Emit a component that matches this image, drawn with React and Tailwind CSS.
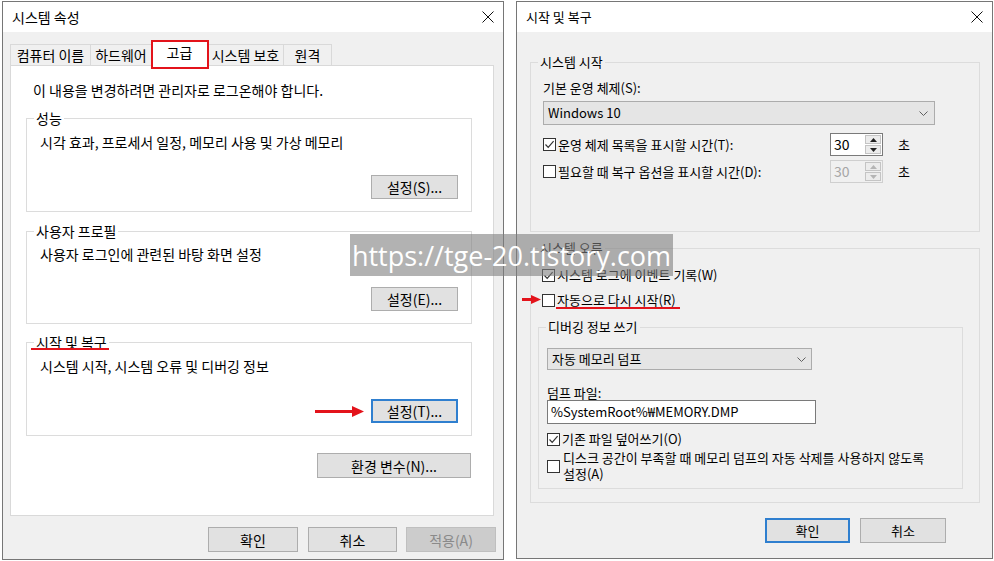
import clsx from "clsx";

function CloseIcon() {
  return (
    <svg width="12" height="12" viewBox="0 0 12 12" className="shrink-0">
      <path d="M0.5 0.5 L11.5 11.5 M11.5 0.5 L0.5 11.5" stroke="#111" strokeWidth="1" fill="none" />
    </svg>
  );
}

function Chevron() {
  return (
    <svg width="9" height="5" viewBox="0 0 9 5" className="shrink-0">
      <path d="M0.5 0.5 L4.5 4.5 L8.5 0.5" stroke="#606060" strokeWidth="1" fill="none" />
    </svg>
  );
}

function RedArrow({ className = "", width = 49, height = 11 }) {
  const head = Math.round(height * 1.1);
  return (
    <svg width={width} height={height} viewBox={`0 0 ${width} ${height}`} className={className}>
      <rect x="0" y={height / 2 - 1.5} width={width - head + 1} height="3" fill="#e3131b" />
      <path d={`M${width - head} 0 L${width} ${height / 2} L${width - head} ${height} Z`} fill="#e3131b" />
    </svg>
  );
}

function WinButton({ children, className = "", focused = false, disabled = false }) {
  return (
    <button
      type="button"
      className={clsx(
        "flex shrink-0 items-center justify-center leading-none",
        focused && "border-2 border-[#2f7fcf] bg-[#e1e1e1] text-black",
        disabled && "border border-[#bfbfbf] bg-[#cccccc] text-[#8a8a8a]",
        !focused && !disabled && "border border-[#adadad] bg-[#e1e1e1] text-black",
        className
      )}
    >
      {children}
    </button>
  );
}

function CheckBox({ checked = false }) {
  return (
    <span className="flex h-[13px] w-[13px] shrink-0 items-center justify-center border border-[#333333] bg-white">
      {checked ? (
        <svg width="11" height="11" viewBox="0 0 11 11">
          <path d="M1.5 5.5 L4.2 8.3 L9.6 2.2" stroke="#333" strokeWidth="1.2" fill="none" />
        </svg>
      ) : null}
    </span>
  );
}

function Group({ title, className = "", children, legendExtra = null }) {
  return (
    <fieldset className={clsx("border border-[#dcdcdc]", className)}>
      <legend className="relative ml-[7px] px-[2px] leading-[16px]">
        {title}
        {legendExtra}
      </legend>
      {children}
    </fieldset>
  );
}

function SpinTri({ up, disabled }) {
  return (
    <span className="flex flex-1 items-center justify-center border border-[#c4c4c4] bg-[#ececec]">
      <svg width="7" height="4" viewBox="0 0 7 4">
        <path d={up ? "M0 4 L3.5 0 L7 4 Z" : "M0 0 L3.5 4 L7 0 Z"} fill={disabled ? "#b5b5b5" : "#222"} />
      </svg>
    </span>
  );
}

function Spinner({ disabled = false }) {
  return (
    <div
      className={clsx(
        "flex h-[23px] w-[53px] shrink-0 border",
        disabled ? "border-[#cfcfcf] bg-[#f0f0f0] text-[#a6a6a6]" : "border-[#7a7a7a] bg-white text-black"
      )}
    >
      <span className="flex-1 pl-[3px] text-[14px] leading-[21px]">30</span>
      <div className="flex w-[17px] flex-col gap-px py-px pr-px">
        <SpinTri up disabled={disabled} />
        <SpinTri disabled={disabled} />
      </div>
    </div>
  );
}

const tabs = [
  { label: "컴퓨터 이름", cls: "w-[80px] border-l" },
  { label: "하드웨어", cls: "w-[61px] border-l" },
  { label: "고급", active: true },
  { label: "시스템 보호", cls: "w-[75px]" },
  { label: "원격", cls: "w-[49px] border-l border-r" },
];

function SystemProperties() {
  return (
    <div className="ml-[2px] mt-[1px] flex h-[559px] w-[502px] shrink-0 flex-col border border-[#767676] bg-[#f0f0f0] text-[14px]">
      <div className="flex h-[30px] shrink-0 items-center justify-between bg-white pl-[9px] pr-[9px]">
        <span className="leading-[16px]">시스템 속성</span>
        <CloseIcon />
      </div>

      <div className="flex flex-col px-[7px]">
        <div className="relative z-10 mt-[8px] flex h-[25px] items-end">
          {tabs.map((tab) =>
            tab.active ? (
              <div
                key={tab.label}
                className="relative -mb-px flex h-[26px] w-[57px] items-start justify-center border-x border-t border-[#d9d9d9] bg-white pt-[3px] leading-[16px]"
              >
                {tab.label}
                <span className="absolute left-[-1px] top-[-1px] h-[29px] w-[58px] border-2 border-[#e3131b]" />
              </div>
            ) : (
              <div
                key={tab.label}
                className={clsx(
                  "flex h-[21px] items-center justify-center border-t border-[#d9d9d9] bg-[#f0f0f0] leading-[16px]",
                  tab.cls
                )}
              >
                {tab.label}
              </div>
            )
          )}
        </div>

        <div className="flex h-[451px] w-[484px] flex-col border border-[#d9d9d9] bg-white">
          <p className="mt-[16px] pl-[22px] leading-[16px]">이 내용을 변경하려면 관리자로 로그온해야 합니다.</p>

          <Group title="성능" className="ml-[15px] mt-[12px] w-[446px]">
            <p className="mt-[8px] pl-[13px] leading-[16px]">시각 효과, 프로세서 일정, 메모리 사용 및 가상 메모리</p>
            <div className="mt-[25px] flex justify-end pb-[12px] pr-[13px]">
              <WinButton className="h-[24px] w-[87px]">설정(S)...</WinButton>
            </div>
          </Group>

          <Group title="사용자 프로필" className="ml-[15px] mt-[11px] w-[446px]">
            <p className="mt-[7px] pl-[13px] leading-[16px]">사용자 로그인에 관련된 바탕 화면 설정</p>
            <div className="mt-[25px] flex justify-end pb-[12px] pr-[13px]">
              <WinButton className="h-[24px] w-[87px]">설정(E)...</WinButton>
            </div>
          </Group>

          <Group
            title="시작 및 복구"
            className="ml-[15px] mt-[10px] w-[446px]"
            legendExtra={<span className="absolute left-[-3px] top-[14px] h-[2px] w-[78px] bg-[#e3131b]" />}
          >
            <p className="mt-[8px] pl-[13px] leading-[16px]">시스템 시작, 시스템 오류 및 디버깅 정보</p>
            <div className="mt-[25px] flex items-center justify-end gap-[7px] pb-[12px] pr-[13px]">
              <RedArrow width={49} height={11} />
              <WinButton focused className="h-[24px] w-[87px]">설정(T)...</WinButton>
            </div>
          </Group>

          <div className="mt-[17px] flex justify-end pr-[22px]">
            <WinButton className="h-[25px] w-[154px]">환경 변수(N)...</WinButton>
          </div>
        </div>

        <div className="mt-[11px] flex justify-end">
          <WinButton className="h-[25px] w-[90px]">확인</WinButton>
          <WinButton className="ml-[10px] h-[25px] w-[89px]">취소</WinButton>
          <WinButton disabled className="ml-[9px] h-[25px] w-[90px]">적용(A)</WinButton>
        </div>
      </div>
    </div>
  );
}

function StartupRecovery() {
  return (
    <div className="ml-[12px] mt-[1px] flex h-[558px] w-[477px] shrink-0 flex-col border border-[#767676] bg-[#f0f0f0] text-[13px]">
      <div className="flex h-[30px] shrink-0 items-center justify-between bg-white pl-[9px] pr-[9px]">
        <span className="leading-[16px]">시작 및 복구</span>
        <CloseIcon />
      </div>

      <Group title="시스템 시작" className="ml-[13px] mt-[22px] w-[450px]">
        <div className="flex flex-col pb-[48px] pl-[12px]">
          <p className="mt-[10px] leading-[16px]">기본 운영 체제(S):</p>
          <div className="mt-[5px] flex h-[24px] w-[392px] items-center justify-between border border-[#acacac] bg-[#e5e5e5] pl-[4px] pr-[6px]">
            <span className="leading-[16px]">Windows 10</span>
            <Chevron />
          </div>
          <div className="mt-[8px] flex h-[23px] items-center">
            <label className="flex w-[287px] items-center gap-[2px] leading-[16px]">
              <CheckBox checked />
              <span>운영 체제 목록을 표시할 시간(T):</span>
            </label>
            <Spinner />
            <span className="ml-[15px] leading-[16px]">초</span>
          </div>
          <div className="mt-[4px] flex h-[23px] items-center">
            <label className="flex w-[287px] items-center gap-[2px] leading-[16px]">
              <CheckBox />
              <span>필요할 때 복구 옵션을 표시할 시간(D):</span>
            </label>
            <Spinner disabled />
            <span className="ml-[15px] leading-[16px]">초</span>
          </div>
        </div>
      </Group>

      <Group title="시스템 오류" className="ml-[13px] mt-[8px] w-[450px]">
        <div className="flex flex-col pb-[13px] pl-[7px]">
          <label className="ml-[4px] mt-[11px] flex items-center gap-[2px] leading-[16px]">
            <CheckBox checked />
            <span>시스템 로그에 이벤트 기록(W)</span>
          </label>
          <label className="relative ml-[4px] mt-[9px] flex items-center gap-[2px] leading-[16px]">
            <RedArrow width={19} height={9} className="absolute right-full top-[3px] mr-[1px]" />
            <CheckBox />
            <span className="relative">
              자동으로 다시 시작(R)
              <span className="absolute left-[-1px] top-[15px] h-[2px] w-[124px] bg-[#e3131b]" />
            </span>
          </label>

          <Group title="디버깅 정보 쓰기" className="mt-[11px] w-[425px]">
            <div className="flex flex-col pb-[6px] pl-[8px]">
              <div className="mt-[13px] flex h-[22px] w-[265px] items-center justify-between border border-[#acacac] bg-[#e5e5e5] pl-[4px] pr-[5px]">
                <span className="leading-[16px]">자동 메모리 덤프</span>
                <Chevron />
              </div>
              <p className="mt-[15px] leading-[15px]">덤프 파일:</p>
              <div className="flex h-[24px] w-[269px] items-center border border-[#7a7a7a] bg-white pl-[3px] leading-[16px]">
                %SystemRoot%₩MEMORY.DMP
              </div>
              <label className="mt-[7px] flex items-center gap-[2px] leading-[16px]">
                <CheckBox checked />
                <span>기존 파일 덮어쓰기(O)</span>
              </label>
              <label className="mt-[3px] flex items-center gap-[3px] leading-[16px]">
                <CheckBox />
                <span>
                  디스크 공간이 부족할 때 메모리 덤프의 자동 삭제를 사용하지 않도록
                  <br />
                  설정(A)
                </span>
              </label>
            </div>
          </Group>
        </div>
      </Group>

      <div className="mt-[15px] flex justify-end pr-[46px]">
        <WinButton focused className="h-[25px] w-[85px]">확인</WinButton>
        <WinButton className="ml-[10px] h-[25px] w-[86px]">취소</WinButton>
      </div>
    </div>
  );
}

export default function App() {
  return (
    <div className="relative flex h-[561px] w-[994px] overflow-hidden bg-white font-['Noto_Sans_CJK_KR',sans-serif] text-black">
      <SystemProperties />
      <StartupRecovery />
      <div className="absolute left-[350px] top-[234px] flex h-[42px] w-[323px] items-center justify-center whitespace-nowrap bg-[#7f7f7f]/60 font-['Open_Sans',sans-serif] text-[27px] leading-none text-white">
        https://tge-20.tistory.com
      </div>
    </div>
  );
}
